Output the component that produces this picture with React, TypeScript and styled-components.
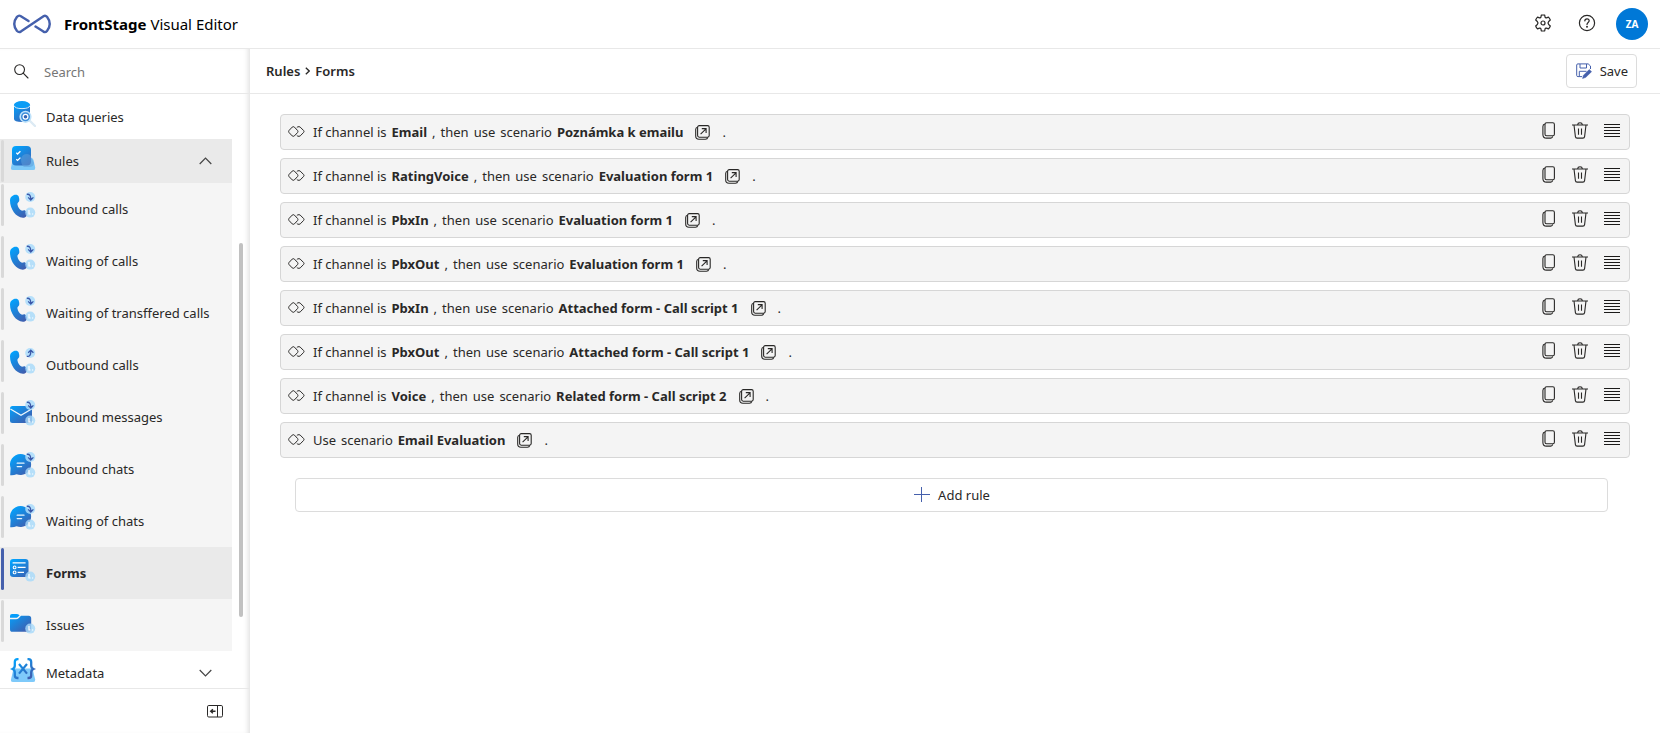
import React from "react";
import styled, { createGlobalStyle } from "styled-components";

const GlobalStyle = createGlobalStyle`
  *, *::before, *::after { box-sizing: border-box; }
  body {
    margin: 0;
    background: #fff;
    color: #292827;
    font: 13px/20px "Noto Sans", "Open Sans", sans-serif;
  }
  button, input { font: inherit; color: inherit; }
`;

const Page = styled.div`
  display: flex;
  flex-direction: column;
  height: 100vh;
`;

const TopBar = styled.header`
  display: flex;
  align-items: center;
  flex: none;
  height: 49px;
  padding: 0 12px 0 13px;
  border-bottom: 1px solid #e8e8e8;
`;

const Title = styled.h1`
  flex: 1;
  margin: 0 0 0 13px;
  color: #000;
  font-size: 15px;
  font-weight: 400;
`;

const IconButton = styled.button<{ $width?: number; $lift?: number }>`
  display: flex;
  align-items: center;
  justify-content: center;
  width: ${(p) => p.$width ?? 32}px;
  height: 32px;
  padding: 0 0 ${(p) => p.$lift ?? 0}px;
  border: 0;
  background: none;
  cursor: pointer;
`;

const Avatar = styled.button`
  width: 32px;
  height: 32px;
  margin-left: 7px;
  padding: 0;
  border: 0;
  border-radius: 50%;
  background: #0078d7;
  color: #fff;
  font-size: 10px;
  font-weight: 700;
  cursor: pointer;
`;

const Body = styled.div`
  display: flex;
  flex: 1;
  min-height: 0;
`;

const Sidebar = styled.aside`
  display: flex;
  flex-direction: column;
  flex: none;
  width: 250px;
  box-shadow: inset -5px 0 5px -3px rgba(0, 0, 0, 0.12);
`;

const SearchBox = styled.label`
  display: flex;
  align-items: center;
  gap: 15px;
  flex: none;
  height: 45px;
  padding: 0 14px;
  border-bottom: 1px solid #e8e8e8;
`;

const SearchInput = styled.input`
  flex: 1;
  min-width: 0;
  padding: 1px 0 0;
  border: 0;
  outline: 0;
  background: none;
  &::placeholder { color: #767676; opacity: 1; }
`;

const NavArea = styled.div`
  position: relative;
  flex: 1;
  min-height: 0;
  overflow: hidden;
`;

const Nav = styled.nav`
  width: 232px;
  padding-top: 1px;
`;

const ScrollThumb = styled.div`
  position: absolute;
  top: 25%;
  right: 7px;
  width: 4px;
  height: 63%;
  border-radius: 2px;
  background: #c1c1c1;
`;

type Mark = "none" | "grey" | "blue";
const markColor = { none: "transparent", grey: "#d9d9d9", blue: "#4560ac" };

const NavLink = styled.a<{ $sub?: boolean; $tone?: string; $mark?: Mark; $bold?: boolean }>`
  display: flex;
  align-items: center;
  gap: 10px;
  height: ${(p) => (p.$sub ? 52 : 44)}px;
  padding-right: 20px;
  background: ${(p) => p.$tone ?? "transparent"};
  color: inherit;
  font-weight: ${(p) => (p.$bold ? 700 : 400)};
  text-decoration: none;
  &::before {
    content: "";
    align-self: flex-start;
    width: 3px;
    height: 42px;
    margin: 1px -4px 0 1px;
    border-radius: 2px;
    background: ${(p) => markColor[p.$mark ?? "none"]};
  }
  & > svg:first-of-type { margin-bottom: ${(p) => (p.$sub ? 8 : 6)}px; flex: none; }
`;

const NavText = styled.span`
  flex: 1;
  white-space: nowrap;
`;

const SidebarFooter = styled.div`
  display: flex;
  align-items: center;
  justify-content: flex-end;
  flex: none;
  height: 45px;
  padding-right: 19px;
  border-top: 1px solid #e8e8e8;
`;

const Main = styled.main`
  flex: 1;
  min-width: 0;
`;

const Toolbar = styled.div`
  display: flex;
  align-items: center;
  justify-content: space-between;
  height: 45px;
  padding: 0 23px 0 16px;
  border-bottom: 1px solid #e8e8e8;
`;

const Breadcrumb = styled.nav`
  display: flex;
  align-items: center;
  gap: 5px;
  font-weight: 600;
  a { color: inherit; text-decoration: none; }
`;

const BoxButton = styled.button`
  display: flex;
  align-items: center;
  justify-content: center;
  gap: 8px;
  height: 34px;
  padding: 0 8px 0 9px;
  border: 1px solid #dcdcdc;
  border-radius: 4px;
  background: #fff;
  cursor: pointer;
`;

const Content = styled.section`
  display: flex;
  flex-direction: column;
  padding: 20px 30px;
`;

const RuleList = styled.ul`
  display: flex;
  flex-direction: column;
  gap: 8px;
  margin: 0 0 20px;
  padding: 0;
  list-style: none;
`;

const RuleRow = styled.li`
  display: flex;
  align-items: center;
  height: 36px;
  padding: 0 1px 0 7px;
  border: 1px solid #d6d6d6;
  border-radius: 4px;
  background: #f4f4f4;
  & > svg { margin-bottom: 2px; }
`;

const Sentence = styled.div`
  display: flex;
  align-items: center;
  flex: 1;
  gap: 5px;
  padding-left: 8px;
  white-space: nowrap;
`;

const OpenLink = styled.a`
  display: flex;
  margin: 0 7px;
  color: inherit;
`;

const AddButton = styled(BoxButton)`
  margin: 0 22px 0 15px;
`;

const Logo = () => (
  <svg width="38" height="20" viewBox="0 0 38 20" fill="none" stroke="#4560ac" strokeWidth="2.4" strokeLinecap="round" strokeLinejoin="round" aria-hidden="true">
    <path d="M15.5 7L7.5 2Q5.8 1 4 2.8Q-1.5 10 4 17Q5.8 18.8 7.8 17.6L30.5 2.2Q32.4 1 34 2.8Q39.5 10 34 17Q32.4 18.8 30.4 17.6L22.5 12.6" />
  </svg>
);

const Gear = () => (
  <svg width="18" height="18" viewBox="0 0 18 18" fill="none" stroke="#292827" strokeWidth="1.2" strokeLinejoin="round" aria-hidden="true">
    <circle cx="9" cy="9" r="2" />
    <path d="M7.3 1.2Q9 .8 10.7 1.2L11.1 3.3Q11.4 4.1 12.4 3.9L14.5 3.1Q15.7 4.3 16.3 6L14.7 7.5Q13.3 9 14.7 10.5L16.3 12Q15.7 13.7 14.5 14.9L12.4 14.1Q11.4 13.9 11.1 14.7L10.7 16.8Q9 17.2 7.3 16.8L6.9 14.7Q6.6 13.9 5.6 14.1L3.5 14.9Q2.3 13.7 1.7 12L3.3 10.5Q4.7 9 3.3 7.5L1.7 6Q2.3 4.3 3.5 3.1L5.6 3.9Q6.6 4.1 6.9 3.3Z" />
  </svg>
);

const Help = () => (
  <svg width="18" height="18" viewBox="0 0 18 18" fill="none" stroke="#292827" strokeWidth="1.2" strokeLinecap="round" aria-hidden="true">
    <circle cx="9" cy="9" r="7.6" />
    <path d="M6.8 6.9Q6.9 4.8 9 4.8T11.2 6.8C11.2 8.5 9 8.6 9 10.5" />
    <circle cx="9" cy="12.7" r=".4" fill="#292827" />
  </svg>
);

const SearchIcon = () => (
  <svg width="15" height="15" viewBox="0 0 15 15" fill="none" stroke="#292827" strokeWidth="1.1" strokeLinecap="round" aria-hidden="true">
    <circle cx="5.6" cy="5.6" r="4.9" />
    <path d="M9.2 9.2L14 14" />
  </svg>
);

const Chevron = ({ up }: { up?: boolean }) => (
  <svg width="13" height="8" viewBox="0 0 13 8" fill="none" stroke="#444" strokeWidth="1.2" aria-hidden="true">
    <path d={up ? "M.7 7L6.5 1.2L12.3 7" : "M.7 1L6.5 6.8L12.3 1"} />
  </svg>
);

const CrumbArrow = () => (
  <svg width="5" height="8" viewBox="0 0 5 8" fill="none" stroke="#292827" strokeWidth="1.3" aria-hidden="true">
    <path d="M.8 .8L4.2 4L.8 7.2" />
  </svg>
);

const CollapseIcon = () => (
  <svg width="16" height="13" viewBox="0 0 16 13" fill="none" stroke="#292827" aria-hidden="true">
    <rect x=".5" y=".5" width="15" height="11.5" rx="1.3" />
    <path d="M10.5 .5V12" />
    <path d="M8.5 6.3H4M5.9 4.3L3.7 6.3L5.9 8.3" strokeWidth="1.4" />
  </svg>
);

const SaveIcon = () => (
  <svg width="16" height="16" viewBox="0 0 16 16" fill="none" stroke="#4560ac" aria-hidden="true">
    <path d="M14.5 6V3L12.2 .9H1.9Q.7 .9 .7 2V12.4Q.7 13.6 1.9 13.6H6" />
    <path d="M4 1V5H10.5V1M3.3 13.4V8.3H10.5" />
    <path d="M13.2 6.6L15.5 8.7L9.8 14.3L6.6 15.4L7.4 12.4Z" fill="#4560ac" strokeWidth=".6" />
  </svg>
);

const ChainIcon = () => (
  <svg width="17" height="11" viewBox="0 0 17 11" fill="none" stroke="#292827" strokeWidth="1" strokeLinejoin="round" aria-hidden="true">
    <path d="M4.2 1.1Q5.3 .2 6.4 1.1L9.6 4.5Q10.3 5.5 9.6 6.5L6.4 9.9Q5.3 10.8 4.2 9.9L1 6.5Q.3 5.5 1 4.5Z" />
    <path d="M8.8 1.6L9.7 .9Q11.2 .3 12.2 1.1L15.6 4.5Q16.4 5.5 15.6 6.5L12.2 9.9Q11.2 10.7 9.7 10.1L8.8 9.4" />
  </svg>
);

const OpenIcon = () => (
  <svg width="15" height="15" viewBox="0 0 15 15" fill="none" stroke="#292827" strokeWidth="1.1" aria-hidden="true">
    <rect x="2.6" y=".6" width="11.6" height="11.6" rx="1.6" />
    <path d="M2.4 2.2Q.7 2.6 .7 4.4V11Q.7 14.2 4 14.2H10.4Q12.4 14.2 12.8 12.4" />
    <path d="M5.6 9.2L11 3.8M6.8 3.6H11.1V8" />
  </svg>
);

const CopyIcon = () => (
  <svg width="13" height="17" viewBox="0 0 13 17" fill="none" stroke="#292827" strokeWidth="1.1" aria-hidden="true">
    <rect x="3" y=".8" width="9.4" height="13" rx="1.6" />
    <path d="M2.8 2.1Q.9 2.5 .9 4.4V12.4Q.9 16.1 4.5 16.1H8.8Q10.3 16.1 10.8 14.4" />
  </svg>
);

const TrashIcon = () => (
  <svg width="16" height="17" viewBox="0 0 16 17" fill="none" stroke="#292827" strokeWidth="1.1" aria-hidden="true">
    <path d="M0 3H16M5.6 2.8Q5.8 .8 8 .8T10.4 2.8M2 3L3.4 14.6Q3.6 16.1 5.1 16.1H10.9Q12.4 16.1 12.6 14.6L14 3M6.5 6.5V12.8M9.5 6.5V12.8" />
  </svg>
);

const HandleIcon = () => (
  <svg width="16" height="13" viewBox="0 0 16 13" stroke="#1b1a19" aria-hidden="true">
    <path d="M0 .5H16M0 3.5H16M0 6.5H16M0 9.5H16M0 12.5H16" />
  </svg>
);

const PlusIcon = () => (
  <svg width="16" height="16" viewBox="0 0 16 16" stroke="#4560ac" aria-hidden="true">
    <path d="M0 7.5H16M7.5 0V15" />
  </svg>
);

type IconKind = "data" | "rules" | "phone" | "mail" | "chat" | "form" | "folder" | "meta";
type Arrow = "in" | "out";

const Glyph = ({ kind, fill }: { kind: IconKind; fill: string }) => {
  switch (kind) {
    case "data":
      return (
        <>
          <path d="M4 3.5V18Q4 21 12 21Q20 21 20 18V3.5Z" fill={fill} />
          <ellipse cx="12" cy="3.6" rx="8" ry="3.5" fill="#0a9cf5" />
          <path d="M4 4.6Q5 7.6 12 7.6T20 4.6" fill="none" stroke="#d4ecfc" strokeWidth="1" />
          <path d="M19 19L25 25" stroke="#dceaf4" strokeWidth="2.4" strokeLinecap="round" />
          <circle cx="15.5" cy="15.8" r="5.3" fill="#3c8edb" stroke="#bfe2fa" strokeWidth="1.6" />
          <circle cx="15.5" cy="15.8" r="2.4" fill="#3464b4" stroke="#fff" strokeWidth="1.2" />
        </>
      );
    case "rules":
      return (
        <>
          <path d="M5 13H21Q23 13 23.5 15L25.2 22.5Q25.5 25 23.5 25H2.8Q.6 25 1 22.5L3 14Z" fill="#7cc8f8" />
          <rect x="2" y="1" width="19" height="19.5" rx="4" fill={fill} />
          <path d="M11 14Q12 9 17 9Q20 9 21 12L24 18Q24 21.5 20 22H14Q11 20 11 14Z" fill="#5c9edb" opacity=".55" />
          <path d="M6.3 7.8L7.6 9L10.4 6.2M6.3 14.2L7.6 15.4L10.4 12.6" fill="none" stroke="#fff" strokeWidth="1.3" />
        </>
      );
    case "phone":
      return <path d="M3.5 3.2C5.5 2.3 8 2.6 8.7 4.4Q9.6 7 9.2 9C8.9 10.3 7.2 10.8 7.4 12.2C7.8 15 9.4 17.4 11.4 18.6C12.7 19.2 13.5 17.8 14.8 18.2Q16.4 19.2 17 21.4C17.4 23.6 15.6 25.6 13 25.7C6 25.8 0 17 0 8.6C0 6 1.2 4.2 3.5 3.2Z" fill={fill} />;
    case "mail":
      return (
        <>
          <rect x="0" y="6" width="22" height="17" rx="2.5" fill={fill} />
          <path d="M.4 9L11 15.3L21.6 9" fill="none" stroke="#eef7fd" strokeWidth="1.3" />
        </>
      );
    case "chat":
      return (
        <>
          <path d="M10.5 2A10.5 10.5 0 1 1 6.6 22.2Q3.5 23.6 .2 23.2L.6 16A10.5 10.5 0 0 1 10.5 2Z" fill={fill} />
          <path d="M7.2 11.2H14M7.2 14.6H11.6" stroke="#e6f4fd" strokeWidth="1.3" strokeLinecap="round" />
        </>
      );
    case "form":
      return (
        <>
          <rect x="0" y="3" width="18.5" height="18" rx="3.2" fill={fill} />
          <path d="M2.6 6.8H15.6M7.6 11.4H15.6M7.6 16.4H14" stroke="#fff" strokeWidth="1.2" />
          <circle cx="4.6" cy="11.4" r="1.4" fill="none" stroke="#fff" strokeWidth="1.1" />
          <circle cx="4.6" cy="16.4" r="1.4" fill="none" stroke="#fff" strokeWidth="1.1" />
        </>
      );
    case "folder":
      return (
        <>
          <path d="M0 9.8V8Q0 6 2 6H6.6Q8 6 9.6 7.3L7.6 9.2Q6.8 9.8 5.6 9.8Z" fill="#069dfa" />
          <path d="M0 11.2H6Q7.6 11.2 8.6 10.2L11 7.8H18.6Q21.2 7.8 21.2 10.4V21.2Q21.2 23.8 18.8 23.8H2.4Q0 23.8 0 21.2Z" fill={fill} />
        </>
      );
    default:
      return (
        <>
          <path d="M3.5 11.5H22.5L25.2 22.5Q25.4 25 23.4 25H2.8Q.6 25 1 22.5Z" fill="#7fcafa" />
          <path d="M8.5 2.2H7.6Q4.8 2.2 4.8 5V8.4Q4.8 11 2.6 12Q4.8 13 4.8 15.4V18.4Q4.8 21 7.6 21H8.5M17.5 2.2H18.4Q21.2 2.2 21.2 5V8.4Q21.2 11 23.4 12Q21.2 13 21.2 15.4V18.4Q21.2 21 18.4 21H17.5" fill="none" stroke={fill} strokeWidth="2.3" />
          <path d="M9 7L17 16.6M17 7L9 16.6" fill="none" stroke={fill} strokeWidth="2.2" />
        </>
      );
  }
};

const NavIcon = ({ kind, arrow, id, badge }: { kind: IconKind; arrow?: Arrow; id: string; badge?: boolean }) => (
  <svg width="26" height="26" viewBox="0 0 26 26" aria-hidden="true">
    <linearGradient id={id} gradientUnits="userSpaceOnUse" x1="3" y1="3" x2="19" y2="24">
      <stop offset="0" stopColor="#00a4ff" />
      <stop offset="1" stopColor="#4458a8" />
    </linearGradient>
    <Glyph kind={kind} fill={`url(#${id})`} />
    {arrow && (
      <>
        <circle cx="20.2" cy="5" r="5" fill="#aadcfb" opacity=".85" />
        <path
          d={arrow === "in" ? "M16.8 2.3Q21 1.6 20.8 7.6M18.2 5.4L20.8 8L23.4 5.4" : "M16.8 8.4Q21 9 20.8 2.8M18.2 4.8L20.8 2.2L23.4 4.8"}
          fill="none" stroke="#3a58aa" strokeWidth="1.3"
        />
      </>
    )}
    {badge && (
      <>
        <circle cx="20.2" cy="20.6" r="5" fill="#a6dafa" opacity=".8" />
        <path d="M19 18V22H20.6M22 22H23.2" fill="none" stroke="#fff" strokeWidth="1.2" />
      </>
    )}
  </svg>
);

const subItems: { label: string; kind: IconKind; arrow?: Arrow }[] = [
  { label: "Inbound calls", kind: "phone", arrow: "in" },
  { label: "Waiting of calls", kind: "phone", arrow: "in" },
  { label: "Waiting of transffered calls", kind: "phone", arrow: "in" },
  { label: "Outbound calls", kind: "phone", arrow: "out" },
  { label: "Inbound messages", kind: "mail", arrow: "in" },
  { label: "Inbound chats", kind: "chat", arrow: "in" },
  { label: "Waiting of chats", kind: "chat", arrow: "in" },
  { label: "Forms", kind: "form" },
  { label: "Issues", kind: "folder" },
];

const rules: { channel?: string; scenario: string }[] = [
  { channel: "Email", scenario: "Poznámka k emailu" },
  { channel: "RatingVoice", scenario: "Evaluation form 1" },
  { channel: "PbxIn", scenario: "Evaluation form 1" },
  { channel: "PbxOut", scenario: "Evaluation form 1" },
  { channel: "PbxIn", scenario: "Attached form - Call script 1" },
  { channel: "PbxOut", scenario: "Attached form - Call script 1" },
  { channel: "Voice", scenario: "Related form - Call script 2" },
  { scenario: "Email Evaluation" },
];

const Rule = ({ channel, scenario }: { channel?: string; scenario: string }) => (
  <RuleRow>
    <ChainIcon />
    <Sentence>
      {channel ? (
        <>
          <span>If channel is</span>
          <b>{channel}</b>
          <span>,</span>
          <span>then</span>
          <span>use</span>
        </>
      ) : (
        <span>Use</span>
      )}
      <span>scenario</span>
      <b>{scenario}</b>
      <OpenLink href="#scenario" aria-label={`Open ${scenario}`}><OpenIcon /></OpenLink>
      <span>.</span>
    </Sentence>
    <IconButton $lift={3} aria-label="Copy rule"><CopyIcon /></IconButton>
    <IconButton $lift={3} aria-label="Delete rule"><TrashIcon /></IconButton>
    <IconButton $lift={3} aria-label="Move rule"><HandleIcon /></IconButton>
  </RuleRow>
);

export default function App() {
  return (
    <Page>
      <GlobalStyle />
      <TopBar>
        <Logo />
        <Title><b>FrontStage</b> Visual Editor</Title>
        <IconButton $width={44} $lift={2} aria-label="Settings"><Gear /></IconButton>
        <IconButton $width={44} $lift={2} aria-label="Help"><Help /></IconButton>
        <Avatar aria-label="Account">ZA</Avatar>
      </TopBar>
      <Body>
        <Sidebar>
          <SearchBox>
            <SearchIcon />
            <SearchInput type="search" placeholder="Search" aria-label="Search" />
          </SearchBox>
          <NavArea>
            <Nav aria-label="Sections">
              <NavLink href="#data"><NavIcon kind="data" id="g-data" /><NavText>Data queries</NavText></NavLink>
              <NavLink href="#rules" $tone="#eaeaea" $mark="grey">
                <NavIcon kind="rules" id="g-rules" /><NavText>Rules</NavText><Chevron up />
              </NavLink>
              {subItems.map((item, i) => {
                const current = item.label === "Forms";
                return (
                  <NavLink
                    key={item.label}
                    href={`#rule-${i}`}
                    $sub
                    $bold={current}
                    $tone={current ? "#eaeaea" : "#f5f5f5"}
                    $mark={current ? "blue" : "grey"}
                    aria-current={current ? "page" : undefined}
                  >
                    <NavIcon kind={item.kind} arrow={item.arrow} id={`g-${i}`} badge />
                    <NavText>{item.label}</NavText>
                  </NavLink>
                );
              })}
              <NavLink href="#metadata"><NavIcon kind="meta" id="g-meta" /><NavText>Metadata</NavText><Chevron /></NavLink>
            </Nav>
            <ScrollThumb />
          </NavArea>
          <SidebarFooter>
            <IconButton aria-label="Collapse sidebar"><CollapseIcon /></IconButton>
          </SidebarFooter>
        </Sidebar>
        <Main>
          <Toolbar>
            <Breadcrumb aria-label="Breadcrumb">
              <a href="#rules">Rules</a>
              <CrumbArrow />
              <a href="#forms">Forms</a>
            </Breadcrumb>
            <BoxButton><SaveIcon />Save</BoxButton>
          </Toolbar>
          <Content>
            <RuleList>
              {rules.map((r, i) => <Rule key={i} {...r} />)}
            </RuleList>
            <AddButton><PlusIcon />Add rule</AddButton>
          </Content>
        </Main>
      </Body>
    </Page>
  );
}
